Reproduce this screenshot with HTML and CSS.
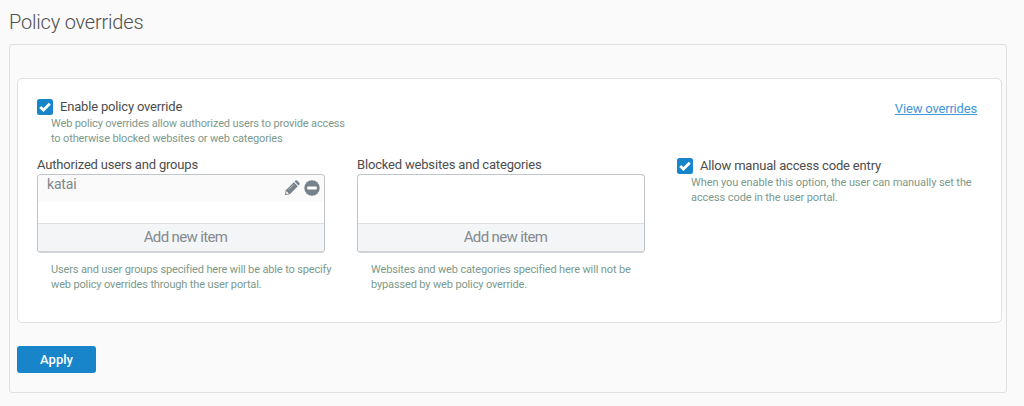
FILE: index.html
```html
<!DOCTYPE html>
<html lang="en">
<head>
  <meta charset="UTF-8">
  <meta name="viewport" content="width=device-width, initial-scale=1.0">
  <title>Policy overrides</title>
  <link rel="stylesheet" href="styles.css">
</head>
<body>

<h1>Policy overrides</h1>

<div class="panel">
  <div class="card">
    <div class="top-row">
      <div class="option">
        <label class="check-label">
          <svg class="checkbox" viewBox="0 0 16 16"><rect width="16" height="16" rx="2.5" fill="#1885cb"/><path d="M3.200 7.900l3.200 3.100 6.400-6.200" fill="none" stroke="#fff" stroke-width="2.800"/></svg>
          <span>Enable policy override</span>
        </label>
        <p class="help">Web policy overrides allow authorized users to provide access<br>to otherwise blocked websites or web categories</p>
      </div>
      <a class="view-link" href="#">View overrides</a>
    </div>

    <div class="columns">
      <div class="column">
        <div class="title">Authorized users and groups</div>
        <div class="list">
          <div class="items">
            <div class="item">
              <span class="name">katai</span>
              <svg class="pencil" viewBox="0 0 16 16"><path d="M.8 15.200l1-4.900 8-8 4 4-8 8z" fill="#76818a"/><path d="M10.600 1.500l.9-.9q.8-.7 1.600 0l2.300 2.300q.7.8 0 1.600l-.9.9z" fill="#76818a"/><path d="M2.600 11.600l1.900 1.900-1.600.4-.7-.7zM4.700 9.500l5-5" fill="#fafafa" stroke="#fafafa" stroke-width=".5"/></svg>
              <svg class="remove" viewBox="0 0 16 16"><circle cx="8" cy="8" r="7.700" fill="#76818a"/><rect x="3.200" y="6.600" width="9.600" height="2.800" rx=".4" fill="#fff"/></svg>
            </div>
          </div>
          <div class="add">Add new item</div>
        </div>
        <p class="help">Users and user groups specified here will be able to specify<br>web policy overrides through the user portal.</p>
      </div>

      <div class="column">
        <div class="title">Blocked websites and categories</div>
        <div class="list">
          <div class="items"></div>
          <div class="add">Add new item</div>
        </div>
        <p class="help">Websites and web categories specified here will not be<br>bypassed by web policy override.</p>
      </div>

      <div class="option">
        <label class="check-label">
          <svg class="checkbox" viewBox="0 0 16 16"><rect width="16" height="16" rx="2.5" fill="#1885cb"/><path d="M3.200 7.900l3.200 3.100 6.400-6.200" fill="none" stroke="#fff" stroke-width="2.800"/></svg>
          <span>Allow manual access code entry</span>
        </label>
        <p class="help wide">When you enable this option, the user can manually set the<br>access code in the user portal.</p>
      </div>
    </div>
  </div>

  <button class="apply">Apply</button>
</div>

</body>
</html>
```
FILE: styles.css
```css
* {
  box-sizing: border-box;
}
body {
  margin: 0;
  padding: 10px 17px 0 9px;
  background: #fafafa;
  color: #4d4d4d;
  font-family: Roboto, sans-serif;
  font-size: 13px;
  letter-spacing: -0.18px;
}
h1 {
  margin: 0;
  height: 34px;
  line-height: 25px;
  font-size: 20px;
  font-weight: 300;
  letter-spacing: -0.2px;
  color: #4f4f4f;
}
.panel {
  height: 349px;
  padding: 33px 4px 0 7px;
  border: 1px solid #e0e0e1;
  border-radius: 3px;
}
.card {
  height: 245px;
  padding: 19px 24px 0 19px;
  background: #fff;
  border: 1px solid #e0e1e2;
  border-radius: 5px;
}
.top-row {
  display: flex;
  justify-content: space-between;
  height: 59px;
}
.check-label {
  display: flex;
  align-items: center;
  gap: 7px;
  height: 18px;
  line-height: 18px;
}
.checkbox {
  width: 16px;
  height: 16px;
}
.view-link {
  margin-top: 2px;
  height: 18px;
  line-height: 18px;
  color: #4297d8;
  text-decoration: underline;
}
.help {
  margin: 0;
  padding: 1px 0 0 14px;
  font-size: 11px;
  line-height: 14.5px;
  letter-spacing: -0.14px;
  white-space: nowrap;
  color: #7c998c;
}
.wide {
  letter-spacing: -0.09px;
}
.columns {
  display: grid;
  grid-template-columns: 320px 320px 1fr;
}
.title {
  height: 17px;
  line-height: 16px;
}
.list {
  width: 288px;
  height: 79px;
  margin-bottom: 9px;
  border: 1px solid #bfc5c9;
  border-bottom: 2px solid #cfd3d7;
  border-radius: 4px;
  overflow: hidden;
}
.items {
  height: 48px;
}
.item {
  display: flex;
  height: 27px;
  padding: 0 4px 0 9px;
  background: #fafafa;
  color: #7c868d;
}
.name {
  flex: 1;
  font-size: 14px;
  line-height: 19px;
}
.pencil,
.remove {
  width: 16px;
  height: 16px;
  margin-top: 5px;
}
.remove {
  margin-left: 4px;
}
.add {
  height: 28px;
  padding-left: 9px;
  line-height: 27px;
  border-top: 1px solid #dcdfe1;
  background: #f4f5f7;
  font-size: 15px;
  letter-spacing: -0.65px;
  text-align: center;
  color: #858a8e;
}
.apply {
  display: block;
  width: 79px;
  height: 27px;
  margin-top: 23px;
  padding: 0;
  border: 0;
  border-radius: 3px;
  background: #1885cb;
  color: #fff;
  font-family: inherit;
  font-size: 13px;
  font-weight: 500;
}
```
